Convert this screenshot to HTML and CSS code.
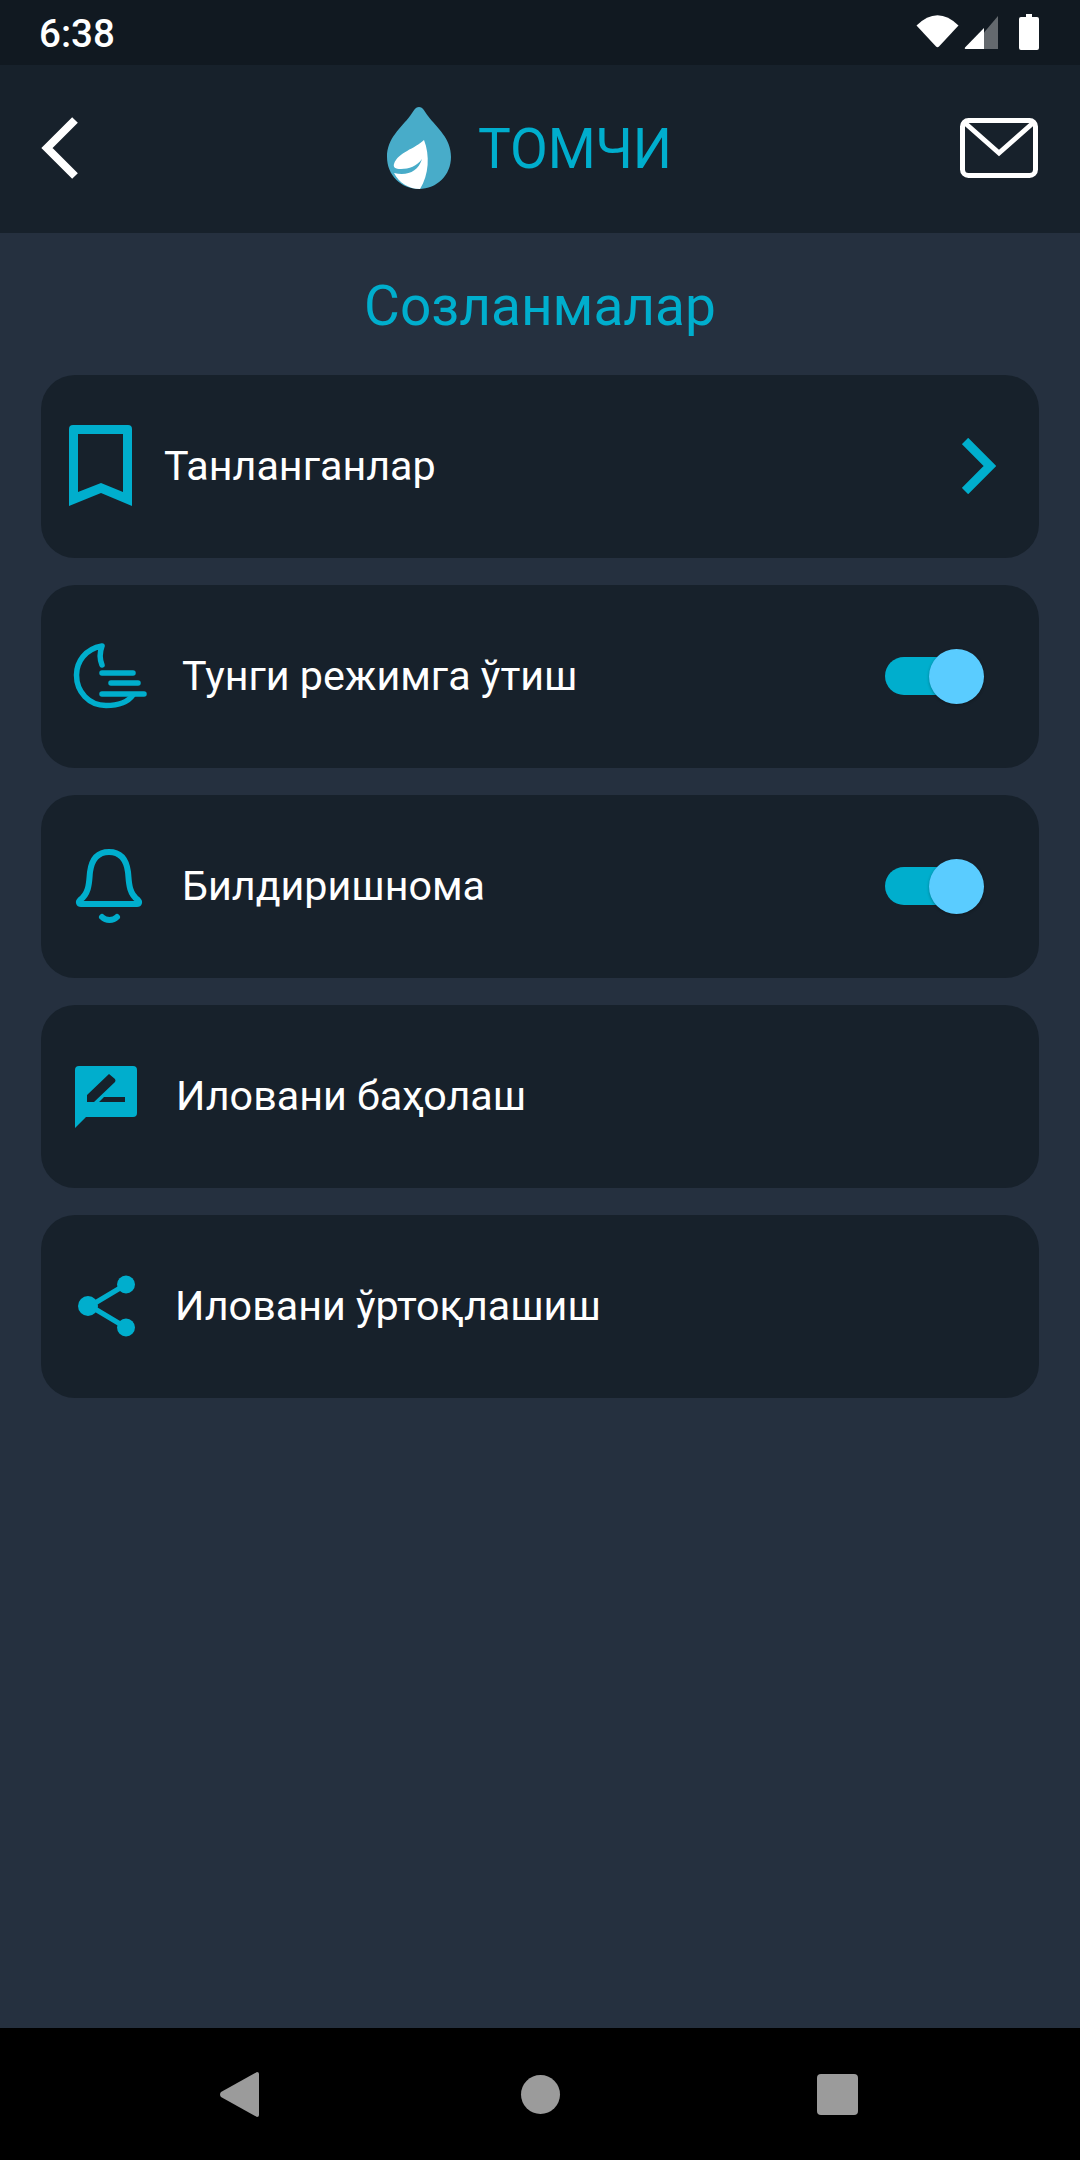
FILE: index.html
```html
<!DOCTYPE html>
<html lang="uz">
<head>
<meta charset="utf-8">
<title>Томчи</title>
<link rel="stylesheet" href="styles.css">
</head>
<body>
<div class="app">
  <div class="status">
    <span class="time">6:38</span>
    <svg class="status-icons" width="123" height="36" viewBox="916 15 123 36">
      <path fill="#fff" d="M916.5 26.5Q937.5 6 958.5 26.5L939 47.5Q937.500 49 936 47.5Z"/>
      <path fill="#fff" fill-opacity=".35" d="M984 33.500 998 17V50H984Z"/>
      <path fill="#fff" d="M965 48.500 984 29V50H966.500Q964 50 965 48.500Z"/>
      <path fill="#fff" d="M1026 15H1032V18H1037Q1039 18 1039 20V49Q1039 51 1037 51H1021Q1019 51 1019 49V20Q1019 18 1021 18H1026Z"/>
    </svg>
  </div>
  <header class="toolbar">
    <svg class="back" width="38" height="62" viewBox="0 0 38 62"><path d="M35 3 7 31 35 59" fill="none" stroke="#fff" stroke-width="8"/></svg>
    <div class="brand">
      <svg width="64" height="82" viewBox="0 0 64 82">
        <path fill="#48acc9" d="M32 0C36 0 38 5 41 9 50 21 64 31 64 50 64 68 50 82 32 82 14 82 0 68 0 50 0 31 14 21 23 9 26 5 28 0 32 0Z"/>
        <path fill="#fff" d="M37 33C43 48 42 68 33 82 22 82 12 76 7 66 20 69 31 65 35 52 30 59 22 62 14 62 8 62 6 60 7 57 11 45 28 42 37 33Z"/>
      </svg>
      <span class="brand-name">ТОМЧИ</span>
    </div>
    <svg class="mail" width="78" height="60" viewBox="0 0 78 60">
      <rect x="2.500" y="2.500" width="73" height="55" rx="6" fill="none" stroke="#fff" stroke-width="5"/>
      <path d="M5 5 39 35 73 5" fill="none" stroke="#fff" stroke-width="5"/>
    </svg>
  </header>
  <main class="content">
    <h1 class="title">Созланмалар</h1>
    <section class="list">
      <div class="row">
        <svg class="icon icon-book" width="64" height="82" viewBox="0 0 64 82"><path fill-rule="evenodd" d="M4 0H59Q63 0 63 4V81L32 68 0 81V4Q0 0 4 0ZM9 9V67L32 58 54 67V9Z" fill="#00aecd"/></svg>
        <span class="label label-book">Танланганлар</span>
        <svg class="chevron" width="34" height="56" viewBox="0 0 34 56"><path d="M3 3 28 28 3 53" fill="none" stroke="#00aecd" stroke-width="9"/></svg>
      </div>
      <div class="row">
        <svg class="icon icon-moon" width="74" height="68" viewBox="0 0 74 68">
          <path d="M29 4C12 7 3.500 20 3.500 33 3.500 50 16 63.500 33 63.500 46 63.500 55 60 60 53M29 4C26 12 27 18 29 23" fill="none" stroke="#00aecd" stroke-width="5.500" stroke-linecap="round"/>
          <path d="M29 31H60M38 41H65M29 52H71" fill="none" stroke="#00aecd" stroke-width="5.500" stroke-linecap="round"/>
        </svg>
        <span class="label label-moon">Тунги режимга ўтиш</span>
        <div class="toggle"><div class="track"></div><div class="thumb"></div></div>
      </div>
      <div class="row">
        <svg class="icon icon-bell" width="68" height="76" viewBox="0 0 68 76">
          <path d="M5 52C15 45 14 32 15 24 17 9 25 4 34 4 43 4 51 9 53 24 54 32 53 45 63 52 65 54 64 56 62 56H6C4 56 3 54 5 52Z" fill="none" stroke="#00aecd" stroke-width="6" stroke-linejoin="round"/>
          <path d="M27 69C31 73 38 73 42 69" fill="none" stroke="#00aecd" stroke-width="6" stroke-linecap="round"/>
        </svg>
        <span class="label label-bell">Билдиришнома</span>
        <div class="toggle"><div class="track"></div><div class="thumb"></div></div>
      </div>
      <div class="row">
        <svg class="icon icon-msg" width="62" height="62" viewBox="0 0 62 62">
          <path fill="#00aecd" d="M4 0H58Q62 0 62 4V47Q62 51 58 51H11L0 62V4Q0 0 4 0Z"/>
          <path fill="#17212b" d="M12 29 34 8 40 13Q41 15 40 16L19 36H12ZM29 31H50V36H24Z"/>
        </svg>
        <span class="label label-msg">Иловани баҳолаш</span>
      </div>
      <div class="row">
        <svg class="icon icon-share" width="58" height="62" viewBox="0 0 58 62">
          <path d="M12 31 48 9.500M12 31 48 52.500" fill="none" stroke="#00aecd" stroke-width="5"/>
          <circle cx="48" cy="9.500" r="9" fill="#00aecd"/><circle cx="48" cy="52.500" r="9" fill="#00aecd"/><circle cx="10" cy="31" r="10" fill="#00aecd"/>
        </svg>
        <span class="label label-msg">Иловани ўртоқлашиш</span>
      </div>
    </section>
  </main>
  <nav class="navbar">
    <svg width="39" height="45" viewBox="0 0 39 45"><path fill="#9b9b9b" d="M37 0Q39 0 39 2V43Q39 45 37 45L1 25Q-1 22.500 1 20Z"/></svg>
    <span class="nav-home"></span>
    <span class="nav-recent"></span>
  </nav>
</div>
</body>
</html>
```
FILE: styles.css
```css
* { box-sizing: border-box; }
html, body { margin: 0; padding: 0; }
body { font-family: Roboto, "Noto Sans", sans-serif; background: #25303f; }
.app { width: 1080px; height: 2160px; display: flex; flex-direction: column; overflow: hidden; }

.status { height: 65px; background: #111921; display: flex; align-items: center; justify-content: space-between; padding: 0 41px 0 39px; color: #fff; }
.time { font-size: 38.5px; font-weight: 500; margin-top: 1px; }
.status-icons { display: block; margin-top: -1px; }

.toolbar { height: 168px; background: #17212b; display: flex; align-items: center; justify-content: space-between; padding: 0 42px 0 40px; }
.back { display: block; margin-top: -3px; }
.mail { display: block; margin-top: -2px; }
.brand { display: flex; align-items: center; gap: 27px; margin-left: 21px; }
.brand svg { display: block; margin-top: -2px; }
.brand-name { font-size: 55px; color: #00aecd; line-height: 1; }

.content { flex: 1; background: #25303f; padding: 0 41px; }
.title { margin: 0; height: 142px; display: flex; align-items: center; justify-content: center; font-size: 55px; font-weight: 400; color: #00aecd; padding-top: 3px; }
.list { display: flex; flex-direction: column; gap: 27.5px; }
.row { height: 182.5px; border-radius: 34px; background: #17212b; display: flex; align-items: center; color: #fff; }
.icon { display: block; flex: none; }
.icon-book { margin-left: 28px; }
.icon-moon { margin-left: 32px; }
.icon-bell { margin-left: 34px; }
.icon-msg { margin-left: 34px; margin-top: 2px; }
.icon-share { margin-left: 37px; }
.label { font-size: 41.25px; }
.label-book { margin-left: 31px; }
.label-moon { margin-left: 35px; }
.label-bell { margin-left: 39px; }
.label-msg { margin-left: 39px; }
.chevron { margin-left: auto; margin-right: 43px; display: block; }

.toggle { margin-left: auto; margin-right: 55px; width: 99px; height: 55px; position: relative; display: flex; align-items: center; }
.track { width: 74px; height: 38px; border-radius: 19px; background: #00aecd; }
.thumb { position: absolute; right: 0; top: 0; width: 55px; height: 55px; border-radius: 50%; background: #5accff; box-shadow: 0 1px 3px rgba(0,0,0,.3); }

.navbar { height: 132px; background: #000; display: flex; align-items: center; padding: 0 222px 0 220px; justify-content: space-between; }
.navbar svg { display: block; }
.nav-home { width: 39px; height: 39px; border-radius: 50%; background: #9b9b9b; margin-left: 5px; }
.nav-recent { width: 41px; height: 41px; border-radius: 4px; background: #9b9b9b; }
```
